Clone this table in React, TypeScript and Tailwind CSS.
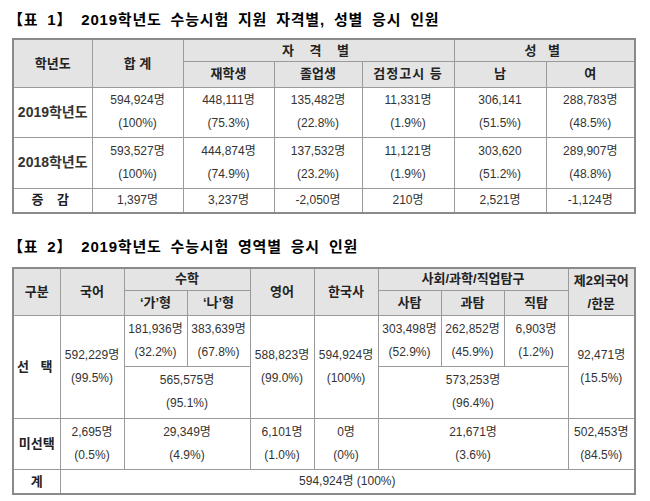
const font = { fontFamily: '"Liberation Sans", "Noto Sans CJK KR", sans-serif' };

const th = "border border-[#9a9a9a] bg-[#e4e4e4] font-bold text-center text-[13px] text-[#222] whitespace-nowrap";
const td = "border border-[#9a9a9a] text-center text-[12px] text-[#333] leading-[23px] whitespace-nowrap";

function Cell({ n, p, className = "", ...rest }: { n: string; p: string; className?: string; rowSpan?: number; colSpan?: number }) {
  return (
    <td className={`${td} ${className}`} {...rest}>
      <div>{n}</div>
      <div>{p}</div>
    </td>
  );
}

export default function App() {
  return (
    <div className="w-[650px] h-[501px] bg-white text-black overflow-hidden" style={font}>
      <div className="pl-[8px] pt-[9px] h-[38px] text-[15px] font-bold tracking-[0.8px] [word-spacing:4px]">
        【표 1】 2019학년도 수능시험 지원 자격별, 성별 응시 인원
      </div>
      <table className="ml-[12px] w-[622px] table-fixed border-collapse border-2 border-[#8a8a8a]">
        <colgroup>
          <col className="w-[79px]" />
          <col className="w-[91px]" />
          <col className="w-[91px]" />
          <col className="w-[88px]" />
          <col className="w-[92px]" />
          <col className="w-[92px]" />
          <col className="w-[89px]" />
        </colgroup>
        <thead>
          <tr className="h-[22px]">
            <th rowSpan={2} className={th}>학년도</th>
            <th rowSpan={2} className={th}>합 계</th>
            <th colSpan={3} className={`${th} tracking-[6px]`}>자 격 별</th>
            <th colSpan={2} className={`${th} tracking-[4px]`}>성 별</th>
          </tr>
          <tr className="h-[26px]">
            <th className={th}>재학생</th>
            <th className={th}>졸업생</th>
            <th className={`${th} tracking-[1px]`}>검정고시 등</th>
            <th className={th}>남</th>
            <th className={th}>여</th>
          </tr>
        </thead>
        <tbody>
          <tr className="h-[50px]">
            <td className={`${td} font-bold text-[#111] text-[14px]`}>2019학년도</td>
            <Cell n="594,924명" p="(100%)" />
            <Cell n="448,111명" p="(75.3%)" />
            <Cell n="135,482명" p="(22.8%)" />
            <Cell n="11,331명" p="(1.9%)" />
            <Cell n="306,141" p="(51.5%)" />
            <Cell n="288,783명" p="(48.5%)" />
          </tr>
          <tr className="h-[51px]">
            <td className={`${td} font-bold text-[#111] text-[14px]`}>2018학년도</td>
            <Cell n="593,527명" p="(100%)" />
            <Cell n="444,874명" p="(74.9%)" />
            <Cell n="137,532명" p="(23.2%)" />
            <Cell n="11,121명" p="(1.9%)" />
            <Cell n="303,620" p="(51.2%)" />
            <Cell n="289,907명" p="(48.8%)" />
          </tr>
          <tr className="h-[23px]">
            <td className={`${th} bg-white tracking-[5px]`}>증 감</td>
            <td className={td}>1,397명</td>
            <td className={td}>3,237명</td>
            <td className={td}>-2,050명</td>
            <td className={td}>210명</td>
            <td className={td}>2,521명</td>
            <td className={td}>-1,124명</td>
          </tr>
        </tbody>
      </table>

      <div className="pl-[8px] pt-[22px] h-[53px] text-[15px] font-bold tracking-[0.8px] [word-spacing:4px]">
        【표 2】 2019학년도 수능시험 영역별 응시 인원
      </div>
      <table className="ml-[12px] w-[622px] table-fixed border-collapse border-2 border-[#8a8a8a]">
        <colgroup>
          <col className="w-[47px]" />
          <col className="w-[64px]" />
          <col className="w-[63px]" />
          <col className="w-[63px]" />
          <col className="w-[64px]" />
          <col className="w-[64px]" />
          <col className="w-[63px]" />
          <col className="w-[63px]" />
          <col className="w-[64px]" />
          <col className="w-[67px]" />
        </colgroup>
        <thead>
          <tr className="h-[22px]">
            <th rowSpan={2} className={th}>구분</th>
            <th rowSpan={2} className={th}>국어</th>
            <th colSpan={2} className={th}>수학</th>
            <th rowSpan={2} className={th}>영어</th>
            <th rowSpan={2} className={th}>한국사</th>
            <th colSpan={3} className={th}>사회/과학/직업탐구</th>
            <th rowSpan={2} className={`${th} leading-[23px]`}>
              <div>제2외국어</div>
              <div>/한문</div>
            </th>
          </tr>
          <tr className="h-[24px]">
            <th className={th}>‘가’형</th>
            <th className={th}>‘나’형</th>
            <th className={th}>사탐</th>
            <th className={th}>과탐</th>
            <th className={th}>직탐</th>
          </tr>
        </thead>
        <tbody>
          <tr className="h-[51px]">
            <td rowSpan={2} className={`${th} bg-white tracking-[4px]`}>선 택</td>
            <Cell rowSpan={2} n="592,229명" p="(99.5%)" />
            <Cell n="181,936명" p="(32.2%)" />
            <Cell n="383,639명" p="(67.8%)" />
            <Cell rowSpan={2} n="588,823명" p="(99.0%)" />
            <Cell rowSpan={2} n="594,924명" p="(100%)" />
            <Cell n="303,498명" p="(52.9%)" />
            <Cell n="262,852명" p="(45.9%)" />
            <Cell n="6,903명" p="(1.2%)" />
            <Cell rowSpan={2} n="92,471명" p="(15.5%)" />
          </tr>
          <tr className="h-[52px]">
            <Cell colSpan={2} n="565,575명" p="(95.1%)" />
            <Cell colSpan={3} n="573,253명" p="(96.4%)" />
          </tr>
          <tr className="h-[51px]">
            <td className={`${th} bg-white`}>미선택</td>
            <Cell n="2,695명" p="(0.5%)" />
            <Cell colSpan={2} n="29,349명" p="(4.9%)" />
            <Cell n="6,101명" p="(1.0%)" />
            <Cell n="0명" p="(0%)" />
            <Cell colSpan={3} n="21,671명" p="(3.6%)" />
            <Cell n="502,453명" p="(84.5%)" />
          </tr>
          <tr className="h-[25px]">
            <td className={`${th} bg-white`}>계</td>
            <td colSpan={9} className={td}>594,924명 (100%)</td>
          </tr>
        </tbody>
      </table>
    </div>
  );
}
